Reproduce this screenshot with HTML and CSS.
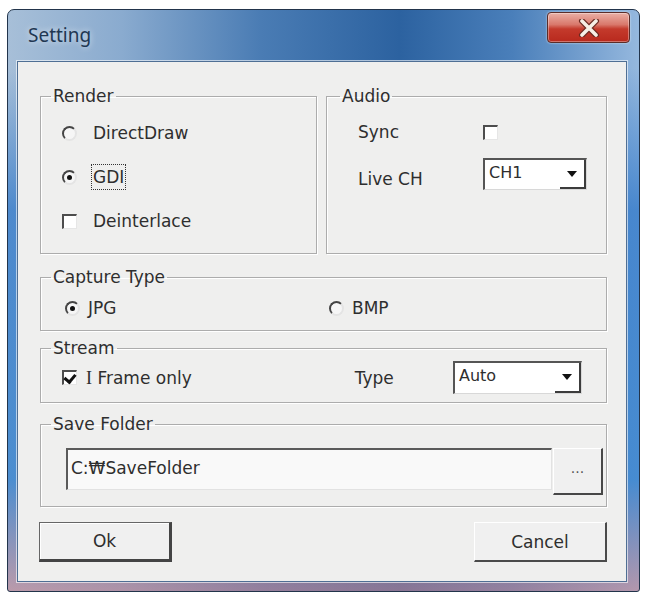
FILE: index.html
```html
<!DOCTYPE html>
<html lang="en">
<head>
  <meta charset="UTF-8" />
  <title>Setting</title>
  <link rel="stylesheet" href="styles.css">
</head>
<body>
  <div class="window">
    <div class="titlebar">
      <span class="title">Setting</span>
      <button class="close" title="Close">
        <svg width="22" height="18" viewBox="0 0 22 18">
          <path d="M4 2 L18 16 M18 2 L4 16" stroke="#6b2a22" stroke-width="6" stroke-linecap="round" />
          <path d="M4 2 L18 16 M18 2 L4 16" stroke="#f6efe6" stroke-width="3.6" stroke-linecap="round" />
        </svg>
      </button>
    </div>

    <div class="client">
      <div class="top-row">
        <fieldset class="group render">
          <legend>Render</legend>
          <div class="body options">
            <label class="opt"><span class="radio"></span>DirectDraw</label>
            <label class="opt"><span class="radio on"></span><span class="focus">GDI</span></label>
            <label class="opt"><span class="check"></span>Deinterlace</label>
          </div>
        </fieldset>

        <fieldset class="group audio">
          <legend>Audio</legend>
          <div class="body">
            <div class="pair">
              <span class="name">Sync</span>
              <span class="check"></span>
            </div>
            <div class="pair live">
              <span class="name">Live CH</span>
              <div class="combo ch">
                <span class="val">CH1</span>
                <span class="drop"><i></i></span>
              </div>
            </div>
          </div>
        </fieldset>
      </div>

      <fieldset class="group capture">
        <legend>Capture Type</legend>
        <div class="body split">
          <label class="opt"><span class="radio on"></span>JPG</label>
          <label class="opt"><span class="radio"></span>BMP</label>
        </div>
      </fieldset>

      <fieldset class="group stream">
        <legend>Stream</legend>
        <div class="body stream-row">
          <label class="opt"><span class="check on"></span><span class="serif">I</span>&nbsp;Frame only</label>
          <span class="type-name">Type</span>
          <div class="combo auto">
            <span class="val">Auto</span>
            <span class="drop"><i></i></span>
          </div>
        </div>
      </fieldset>

      <fieldset class="group save">
        <legend>Save Folder</legend>
        <div class="body path-row">
          <div class="path">C:₩SaveFolder</div>
          <button class="browse">...</button>
        </div>
      </fieldset>

      <div class="actions">
        <button class="btn default">Ok</button>
        <button class="btn">Cancel</button>
      </div>
    </div>
  </div>
</body>
</html>
```

FILE: styles.css
```css
* {
  box-sizing: border-box;
}
body {
  margin: 0;
  background: #fff;
  font-family: "DejaVu Sans", sans-serif;
  font-size: 17px;
  color: #2e2e2e;
}

/* aero frame */
.window {
  margin: 9px 0 0 7px;
  width: 633px;
  height: 583px;
  border: 1px solid #22344b;
  border-radius: 7px 7px 3px 3px;
  padding: 0 12px 9px 9px;
  display: flex;
  flex-direction: column;
  background:
    linear-gradient(180deg, rgba(255,255,255,0) 0, rgba(255,255,255,0) 58px, rgba(40,115,200,.7) 200px, rgba(45,125,205,.75) 470px, rgba(200,130,140,.6) 100%),
    linear-gradient(90deg, #a7bfd8 0%, #8aabcf 18%, #4a7cb4 40%, #2c62a0 62%, #4a7fba 80%, #95b8de 100%);
}
.titlebar {
  height: 51px;
  display: flex;
  align-items: flex-start;
}
.title {
  margin: 15px 0 0 11px;
  line-height: 20px;
  font-family: "Noto Sans", sans-serif;
  font-size: 19px;
  color: #1f3752;
  text-shadow: 0 0 6px rgba(255,255,255,.7);
}
.close {
  margin: 2px -3px 0 auto;
  width: 83px;
  height: 31px;
  padding: 0;
  border: 1px solid #5b2d29;
  border-radius: 4px;
  background: linear-gradient(180deg, #eab0a6 0%, #d9786b 40%, #c43a2c 55%, #b8291d 100%);
  box-shadow: inset 0 0 0 1px rgba(255,255,255,.35), 0 0 2px rgba(255,255,255,.8);
  display: flex;
  align-items: center;
  justify-content: center;
}

/* dialog body */
.client {
  flex: 1;
  background: #efefee;
  border: 1px solid #4f6f94;
  box-shadow: 0 0 0 1px rgba(255,255,255,.6);
  padding: 24px 19px 0 22px;
}
.top-row {
  display: flex;
  justify-content: space-between;
}
.group {
  margin: 0;
  padding: 0;
  min-width: 0;
  border: 1px solid #acacac;
  box-shadow: inset 1px 1px 0 #fff, 1px 1px 0 #fff;
}
.group legend {
  margin-left: 10px;
  padding: 0 2px;
  line-height: 20px;
}
.render {
  width: 277px;
  height: 168px;
}
.audio {
  width: 281px;
  height: 168px;
}
.audio legend {
  margin-left: 13px;
}
.capture {
  margin-top: 13px;
  height: 64px;
}
.stream {
  margin-top: 7px;
  height: 65px;
}
.save {
  margin-top: 11px;
  height: 93px;
}

.options {
  padding: 16px 0 0 21px;
  display: flex;
  flex-direction: column;
  gap: 22px;
}
.opt {
  display: flex;
  align-items: center;
  height: 22px;
  line-height: 22px;
}
.options .radio,
.options .check {
  margin-right: 16px;
}
.focus {
  outline: 1px dotted #333;
  outline-offset: 1px;
}

/* classic 3d radio and check */
.radio {
  position: relative;
  width: 15px;
  height: 15px;
  border-radius: 50%;
  border: 2px solid;
  border-color: #454545 #e4e4e4 #e4e4e4 #454545;
  background: #f6f6f6;
  flex: none;
}
.radio.on::after {
  content: "";
  position: absolute;
  inset: 0;
  margin: auto;
  width: 5px;
  height: 5px;
  border-radius: 50%;
  background: #111;
}
.check {
  position: relative;
  width: 15px;
  height: 15px;
  background: #fff;
  border-top: 2px solid #4d4d4d;
  border-left: 2px solid #4d4d4d;
  border-right: 1px solid #e6e6e6;
  border-bottom: 1px solid #e6e6e6;
  flex: none;
}
.check.on::after {
  content: "";
  position: absolute;
  left: 2px;
  top: 0;
  width: 5px;
  height: 8px;
  border-right: 3px solid #111;
  border-bottom: 3px solid #111;
  transform: rotate(40deg);
}

.audio .body {
  padding: 15px 0 0 31px;
}
.pair {
  display: flex;
  align-items: center;
  height: 22px;
}
.pair .name {
  width: 125px;
}
.pair.live {
  margin-top: 15px;
  height: 32px;
  align-items: flex-end;
}
.pair.live .name {
  line-height: 22px;
}

/* combobox */
.combo {
  display: flex;
  background: #fff;
  border-top: 2px solid #555;
  border-left: 2px solid #555;
  border-right: 1px solid #d8d8d8;
  border-bottom: 1px solid #d8d8d8;
}
.combo .val {
  flex: 1;
  padding-left: 4px;
  line-height: 26px;
  font-size: 16px;
}
.combo .drop {
  width: 26px;
  border-right: 2px solid #3c3c3c;
  border-bottom: 2px solid #3c3c3c;
  display: flex;
  align-items: center;
  justify-content: center;
}
.combo .drop i {
  width: 0;
  height: 0;
  border-left: 5px solid transparent;
  border-right: 5px solid transparent;
  border-top: 6px solid #111;
}
.combo.ch {
  width: 104px;
  height: 32px;
}
.combo.auto {
  width: 129px;
  height: 33px;
  margin-left: auto;
}

.split {
  padding: 10px 0 0 24px;
  display: grid;
  grid-template-columns: 264px 1fr;
}
.split .radio {
  margin-right: 8px;
}

.stream-row {
  padding: 3px 24px 0 21px;
  display: flex;
  align-items: center;
}
.stream-row .check {
  margin-right: 9px;
}
.serif {
  font-family: "Liberation Serif", serif;
  font-size: 18px;
}
.type-name {
  margin-left: 163px;
}

.path-row {
  padding: 14px 0 0 25px;
  display: flex;
  align-items: flex-start;
}
.path {
  width: 486px;
  height: 42px;
  padding-left: 3px;
  line-height: 36px;
  background: #f9f9f9;
  border-top: 2px solid #5a5a5a;
  border-left: 2px solid #5a5a5a;
  border-right: 1px solid #e2e2e2;
  border-bottom: 1px solid #e2e2e2;
}
.browse {
  width: 50px;
  height: 47px;
  margin-left: 1px;
  padding: 0 0 6px;
  background: #f0f0f0;
  border: 1px solid #fff;
  border-right: 2px solid #474747;
  border-bottom: 2px solid #474747;
  font-family: "DejaVu Sans", sans-serif;
  font-size: 14px;
  color: #555;
}

.actions {
  margin-top: 15px;
  display: flex;
  justify-content: space-between;
}
.btn {
  width: 133px;
  height: 40px;
  background: #f0f0f0;
  border: 1px solid #fff;
  border-right: 2px solid #4a4a4a;
  border-bottom: 2px solid #4a4a4a;
  font-family: "DejaVu Sans", sans-serif;
  font-size: 17px;
  color: #2e2e2e;
}
.btn.default {
  margin-left: -1px;
  border: 1px solid #666;
  border-right: 3px solid #444;
  border-bottom: 3px solid #444;
  box-shadow: inset 1px 1px 0 #fff;
}
```
